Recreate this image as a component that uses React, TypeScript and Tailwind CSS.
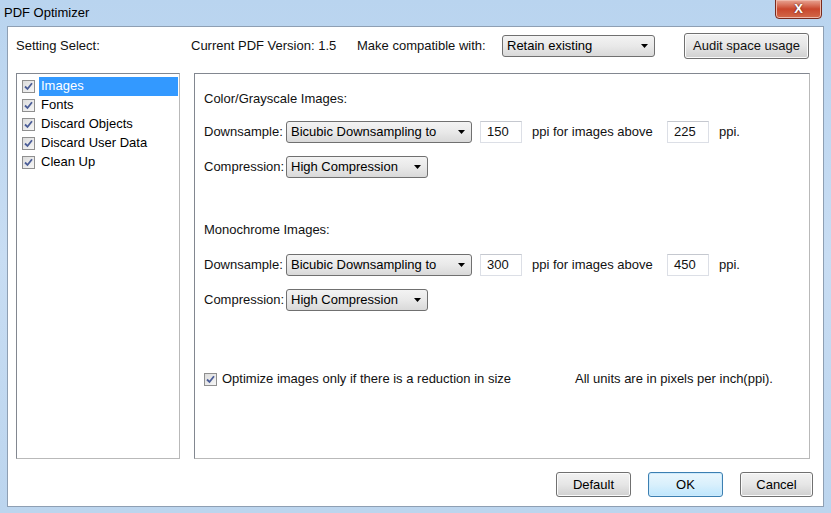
import React from "react";

const font = { fontFamily: '"Liberation Sans", Arial, sans-serif' };

function Check({ className = "" }: { className?: string }) {
  return (
    <span className={`inline-flex h-[13px] w-[13px] shrink-0 items-center justify-center border border-[#8f8f8f] bg-gradient-to-br from-[#dcdcdc] to-[#f6f6f6] ${className}`}>
      <svg width="9" height="9" viewBox="0 0 9 9">
        <path d="M1 4.5 L3.5 7 L8 1.2" fill="none" stroke="#4b5d97" strokeWidth="1.8" />
      </svg>
    </span>
  );
}

function Combo({ value, w }: { value: string; w: string }) {
  return (
    <div className={`flex h-[22px] ${w} items-center justify-between rounded-[3px] border border-[#707070] bg-gradient-to-b from-[#f3f3f3] via-[#e9e9e9] to-[#d9d9d9] pl-[4px] pr-[6px]`}>
      <span className="text-[13px] text-black">{value}</span>
      <svg width="7" height="4" viewBox="0 0 7 4">
        <path d="M0 0 H7 L3.5 4 Z" fill="#000" />
      </svg>
    </div>
  );
}

function Field({ value }: { value: string }) {
  return (
    <div className="flex h-[22px] w-[42px] items-center border border-[#dcdfe6] border-t-[#c5c8cf] bg-white pl-[6px] text-[13px]">
      {value}
    </div>
  );
}

function Btn({ label, w, focus }: { label: string; w: string; focus?: boolean }) {
  return (
    <div
      className={`flex h-[25px] ${w} items-center justify-center rounded-[3px] border text-[13px] text-black ${
        focus
          ? "border-[#3c7fb1] bg-gradient-to-b from-[#eaf6fd] via-[#d9f0fc] to-[#bee6fd] shadow-[inset_0_0_0_1px_#cdeafc]"
          : "border-[#707070] bg-gradient-to-b from-[#f2f2f2] via-[#e6e6e6] to-[#d0d0d0] shadow-[inset_0_0_0_1px_#fbfbfb]"
      }`}
    >
      {label}
    </div>
  );
}

const items = ["Images", "Fonts", "Discard Objects", "Discard User Data", "Clean Up"];

function SampleGroup({ title, a, b, g1, g2 }: { title: string; a: string; b: string; g1: string; g2: string }) {
  return (
    <>
      <div className="flex h-[20px] items-center">{title}</div>
      <div className={`${g1} flex h-[22px] items-center`}>
        <span className="w-[82px]">Downsample:</span>
        <Combo value="Bicubic Downsampling to" w="w-[186px]" />
        <span className="ml-[8px]"><Field value={a} /></span>
        <span className="ml-[10px] w-[135px]">ppi for images above</span>
        <Field value={b} />
        <span className="ml-[10px]">ppi.</span>
      </div>
      <div className={`${g2} flex h-[22px] items-center`}>
        <span className="w-[82px]">Compression:</span>
        <Combo value="High Compression" w="w-[142px]" />
      </div>
    </>
  );
}

export default function App() {
  return (
    <div style={font} className="relative flex h-[513px] w-[831px] flex-col bg-gradient-to-b from-[#b9d4ef] via-[#c8ddf3] to-[#bcd5ee] text-[13px] text-[#111]">
      {/* title bar */}
      <div className="flex h-[26px] items-center justify-between pl-[4px] pr-[9px]">
        <span className="text-[13px] text-black">PDF Optimizer</span>
        <div className="flex h-[20px] w-[47px] -translate-y-[4px] items-center justify-center rounded-b-[4px] border border-[#7a2a1d] bg-gradient-to-b from-[#e8a493] via-[#c9462c] to-[#d2694a] shadow-[inset_0_0_0_1px_#efb8a9]">
          <span className="text-[13px] font-bold text-white [text-shadow:0_0_2px_#4a1a10]">X</span>
        </div>
      </div>

      {/* client */}
      <div className="mx-[7px] mb-[6px] flex flex-1 flex-col border border-[#8e9fb3] bg-white">
        <div className="flex h-[34px] items-center pl-[8px] pt-[4px]">
          <span className="w-[175px]">Setting Select:</span>
          <span className="w-[166px]">Current PDF Version: 1.5</span>
          <span className="w-[145px]">Make compatible with:</span>
          <Combo value="Retain existing" w="w-[153px]" />
          <div className="ml-[29px] flex h-[26px] w-[125px] items-center justify-center rounded-[3px] border border-[#707070] bg-gradient-to-b from-[#f2f2f2] via-[#e6e6e6] to-[#d0d0d0] shadow-[inset_0_0_0_1px_#fbfbfb]">
            Audit space usage
          </div>
        </div>

        <div className="mt-[12px] flex h-[386px] pl-[8px]">
          {/* left list */}
          <div className="w-[164px] border border-[#828790] border-r-[#b9b9b9] border-b-[#b9b9b9] bg-white pl-[5px] pt-[2px]">
            {items.map((t, i) => (
              <div key={t} className="flex h-[19px] items-center pt-[1px]">
                <Check />
                <span
                  className={`ml-[4px] flex h-[19px] items-center pl-[2px] ${
                    i === 0 ? "w-[139px] bg-[#3399ff] text-white" : "text-black"
                  }`}
                >
                  {t}
                </span>
              </div>
            ))}
          </div>

          {/* right panel */}
          <div className="ml-[14px] flex w-[616px] flex-col border border-[#828790] border-r-[#b9b9b9] border-b-[#b9b9b9] pl-[9px] pt-[15px]">
            <SampleGroup title="Color/Grayscale Images:" a="150" b="225" g1="mt-[12px]" g2="mt-[13px]" />
            <div className="mt-[42px]" />
            <SampleGroup title="Monochrome Images:" a="300" b="450" g1="mt-[14px]" g2="mt-[13px]" />
            <div className="mt-[58px] flex h-[20px] items-center">
              <Check />
              <span className="ml-[5px] w-[353px]">Optimize images only if there is a reduction in size</span>
              <span>All units are in pixels per inch(ppi).</span>
            </div>
          </div>
        </div>

        <div className="mt-[13px] flex justify-end gap-[17px] pr-[10px]">
          <Btn label="Default" w="w-[75px]" />
          <Btn label="OK" w="w-[75px]" focus />
          <Btn label="Cancel" w="w-[73px]" />
        </div>
      </div>
    </div>
  );
}
